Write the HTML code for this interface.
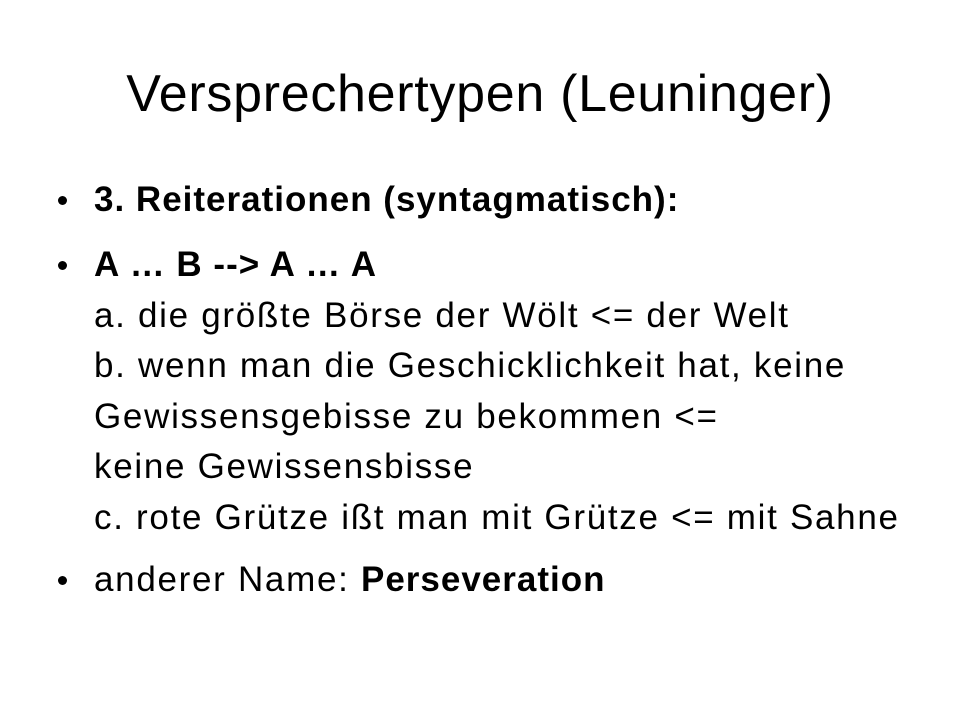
<!DOCTYPE html>
<html><head><meta charset="utf-8"><style>
html,body{margin:0;padding:0;background:#fff;}
body{width:960px;height:720px;position:relative;overflow:hidden;font-family:"Liberation Sans",sans-serif;color:#000;}
.title{position:absolute;left:0;width:960px;top:64px;text-align:center;font-size:52px;letter-spacing:0.7px;line-height:60px;}
.b{position:absolute;left:94px;font-size:35px;line-height:50.5px;letter-spacing:1.7px;white-space:nowrap;}
.b b{letter-spacing:1px;}
.dot{position:absolute;left:58px;width:9px;height:9px;border-radius:50%;background:#000;}
</style></head><body>
<div class="title">Versprechertypen (Leuninger)</div>
<div class="dot" style="top:196px"></div>
<div class="b" style="top:175px"><b>3. Reiterationen (syntagmatisch):</b></div>
<div class="dot" style="top:261px"></div>
<div class="b" style="top:240px"><b>A … B --&gt; A … A</b><br>a. die größte Börse der Wölt &lt;= der Welt<br>b. wenn man die Geschicklichkeit hat, keine<br>Gewissensgebisse zu bekommen &lt;=<br>keine Gewissensbisse<br>c. rote Grütze ißt man mit Grütze &lt;= mit Sahne</div>
<div class="dot" style="top:576px"></div>
<div class="b" style="top:555px">anderer Name: <b>Perseveration</b></div>
</body></html>
